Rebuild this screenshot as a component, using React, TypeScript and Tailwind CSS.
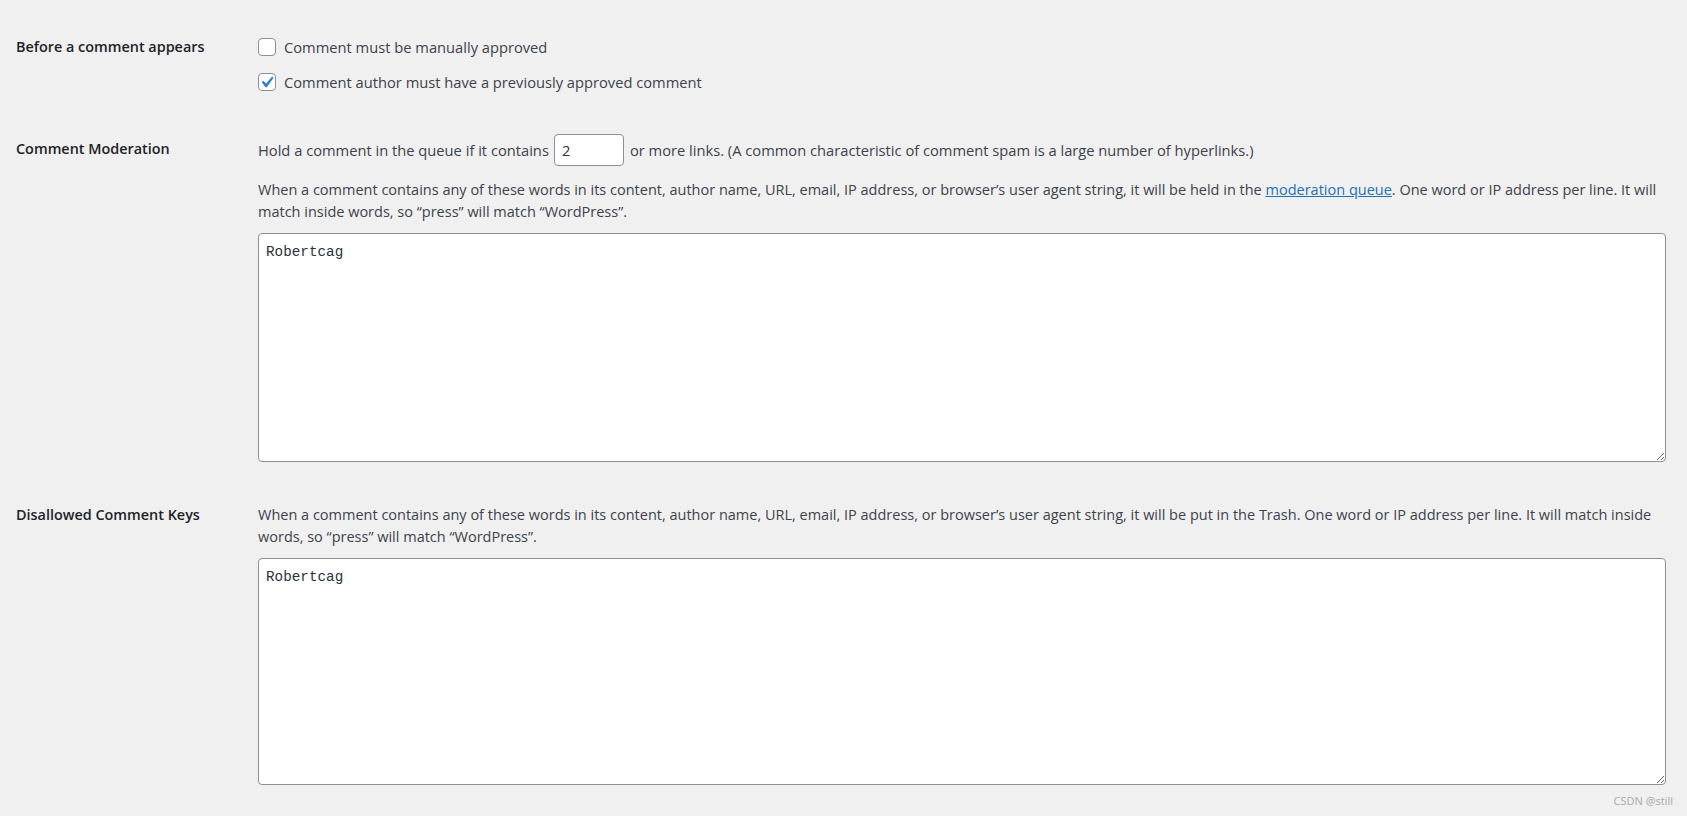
import { useState } from "react";

function Checkbox({ checked, label }: { checked: boolean; label: string }) {
  return (
    <label className="flex items-center h-[18px] gap-[8px] text-[#3c434a]">
      <span className="relative w-[18px] h-[18px] shrink-0 rounded-[4px] border border-[#8c8f94] bg-white">
        {checked && (
          <svg
            viewBox="0 0 20 20"
            className="absolute -left-[4px] -top-[3px] w-[23px] h-[23px]"
          >
            <path
              d="M14.83 4.89l1.34.94-5.81 8.38H9.02L5.78 9.67l1.34-1.25 2.57 2.4z"
              fill="#3582c4"
            />
          </svg>
        )}
      </span>
      <span>{label}</span>
    </label>
  );
}

export default function App() {
  const [links, setLinks] = useState("2");
  const [moderation, setModeration] = useState("Robertcag");
  const [disallowed, setDisallowed] = useState("Robertcag");

  return (
    <div
      className="relative min-h-screen bg-[#f0f0f1] pl-4 pr-[21px] pt-[38px] pb-[32px] text-[14.7px] text-[#3c434a]"
      style={{ fontFamily: '"Open Sans", "Noto Sans", sans-serif' }}
    >
      {/* Before a comment appears */}
      <div className="flex">
        <div className="w-[242px] shrink-0 text-[14.4px] leading-[18px] font-semibold text-[#1d2327]">
          Before a comment appears
        </div>
        <div className="flex flex-col gap-[17px] leading-[18px]">
          <Checkbox checked={false} label="Comment must be manually approved" />
          <Checkbox
            checked={true}
            label="Comment author must have a previously approved comment"
          />
        </div>
      </div>

      {/* Comment Moderation */}
      <div className="flex mt-[43px]">
        <div className="w-[242px] shrink-0 pt-[6px] text-[14.4px] leading-[18px] font-semibold text-[#1d2327]">
          Comment Moderation
        </div>
        <div className="flex-1 min-w-0">
          <div className="flex items-center gap-[5px]">
            <span>Hold a comment in the queue if it contains</span>
            <input
              type="text"
              value={links}
              onChange={(e) => setLinks(e.target.value)}
              className="w-[70px] h-[32px] px-[7px] rounded-[4px] border border-[#8c8f94] bg-white text-[#2c3338] outline-none"
            />
            <span className="ml-[1px]">
              or more links. (A common characteristic of comment spam is a large
              number of hyperlinks.)
            </span>
          </div>
          <p className="mt-[13px] text-[14.5px] leading-[21.5px]">
            When a comment contains any of these words in its content, author
            name, URL, email, IP address, or browser’s user agent string, it will
            be held in the{" "}
            <a href="#" className="text-[#2271b1] underline">
              moderation queue
            </a>
            . One word or IP address per line. It will match inside words, so
            “press” will match “WordPress”.
          </p>
          <textarea
            value={moderation}
            onChange={(e) => setModeration(e.target.value)}
            className="block mt-[11px] w-full h-[229px] px-[7px] pt-[8px] rounded-[4px] border border-[#8c8f94] bg-white text-[14.3px] leading-[20px] text-[#2c3338] outline-none"
            style={{ fontFamily: '"Liberation Mono", monospace' }}
          />
        </div>
      </div>

      {/* Disallowed Comment Keys */}
      <div className="flex mt-[42px]">
        <div className="w-[242px] shrink-0 text-[14.4px] leading-[21.5px] font-semibold text-[#1d2327]">
          Disallowed Comment Keys
        </div>
        <div className="flex-1 min-w-0">
          <p className="text-[14.5px] leading-[21.5px]">
            When a comment contains any of these words in its content, author
            name, URL, email, IP address, or browser’s user agent string, it will
            be put in the Trash. One word or IP address per line. It will match
            inside words, so “press” will match “WordPress”.
          </p>
          <textarea
            value={disallowed}
            onChange={(e) => setDisallowed(e.target.value)}
            className="block mt-[11px] w-full h-[227px] px-[7px] pt-[8px] rounded-[4px] border border-[#8c8f94] bg-white text-[14.3px] leading-[20px] text-[#2c3338] outline-none"
            style={{ fontFamily: '"Liberation Mono", monospace' }}
          />
        </div>
      </div>

      <div className="absolute right-[14px] bottom-[8px] text-[11px] text-[#a7aaad]">
        CSDN @still
      </div>
    </div>
  );
}
